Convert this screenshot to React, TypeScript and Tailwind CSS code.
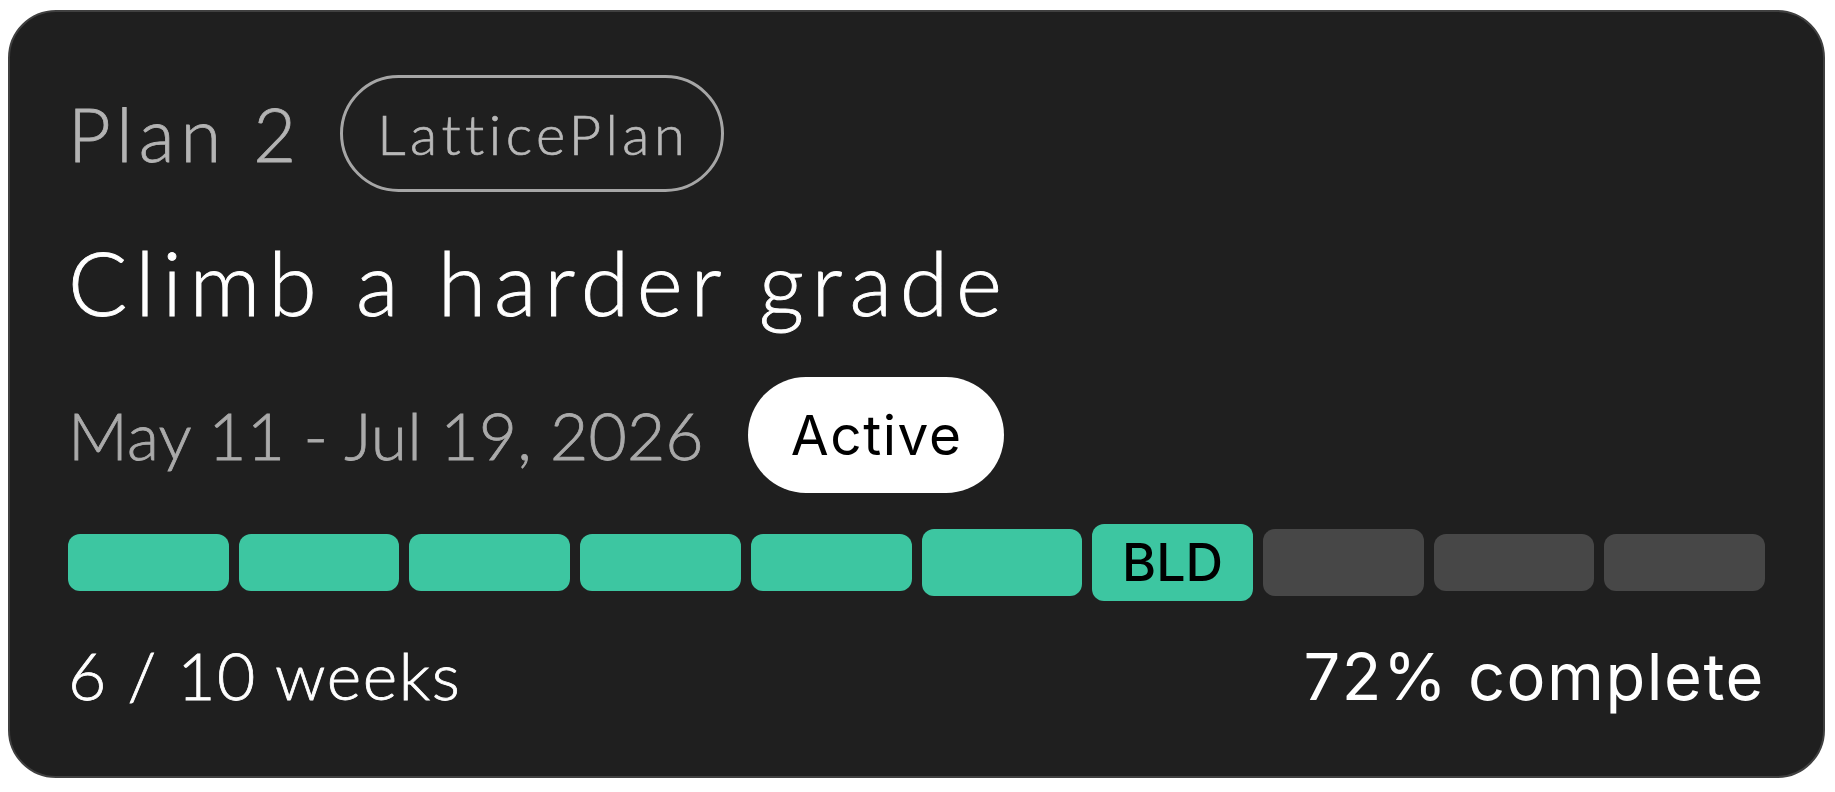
import React from "react";

const segClasses = (i: number) => {
  if (i === 6)
    return "h-[77px] bg-[#3dc6a1] flex items-center justify-center";
  if (i === 5) return "h-[67px] bg-[#3dc6a1]";
  if (i === 7) return "h-[67px] bg-[#474747]";
  if (i < 5) return "h-[57px] bg-[#3dc6a1]";
  return "h-[57px] bg-[#474747]";
};

export default function App() {
  const segs = Array.from({ length: 10 }, (_, i) => i);
  return (
    <div className="min-h-screen bg-white pl-[8px] pt-[10px]">
      <div className="w-[1817px] h-[768px] rounded-[48px] border-2 border-[#404040] bg-[#1f1f1f] px-[58px] pt-[63px] flex flex-col">
        <div className="flex items-center h-[117px] gap-[38px]">
          <span className="font-[Lato,sans-serif] font-light tracking-[6px] [-webkit-text-stroke:0.8px_currentColor] text-[74px] leading-none text-[#b3b3b3]">
            Plan 2
          </span>
          <span className="h-[117px] flex items-center rounded-full border-[3px] border-[#a6a6a6] pl-[34px] pr-[32px] font-[Lato,sans-serif] font-light tracking-[4.5px] [-webkit-text-stroke:0.7px_currentColor] text-[56px] leading-none text-[#b8b8b8]">
            LatticePlan
          </span>
        </div>
        <div className="mt-[46px] font-[Lato,sans-serif] font-light tracking-[7.7px] [-webkit-text-stroke:0.9px_currentColor] text-[88px] leading-none text-white">
          Climb a harder grade
        </div>
        <div className="mt-[51px] flex items-center h-[116px] gap-[44px]">
          <span className="font-[Lato,sans-serif] font-light tracking-[0.2px] [-webkit-text-stroke:0.8px_currentColor] text-[66px] leading-none text-[#aaaaaa]">
            May 11 - Jul 19, 2026
          </span>
          <span className="h-[116px] rounded-full bg-white pl-[43px] pr-[42px] flex items-center font-[Inter,sans-serif] tracking-[1.5px] text-[55px] leading-none text-black">
            Active
          </span>
        </div>
        <div className="mt-[31px] flex items-center gap-[10px] h-[77px]">
          {segs.map((i) => (
            <div key={i} className={"flex-1 rounded-[12px] " + segClasses(i)}>
              {i === 6 && (
                <span className="font-[Inter,sans-serif] text-[52px] leading-none font-medium text-black">
                  BLD
                </span>
              )}
            </div>
          ))}
        </div>
        <div className="mt-[41px] flex items-baseline justify-between">
          <span className="font-[Lato,sans-serif] font-light tracking-[1.6px] [-webkit-text-stroke:0.8px_currentColor] text-[66px] leading-none text-white">
            6 / 10 weeks
          </span>
          <span className="font-[Inter,sans-serif] tracking-[1.5px] text-[65px] leading-none text-white">
            72% complete
          </span>
        </div>
      </div>
    </div>
  );
}
